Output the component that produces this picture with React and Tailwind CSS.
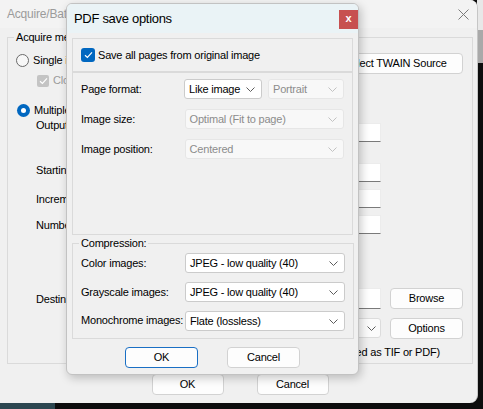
import React from "react";

function Chevron({ disabled }) {
  return (
    <svg width="9" height="5" viewBox="0 0 9 5" className="shrink-0">
      <path
        d="M0.5 0.5L4.5 4.5L8.5 0.5"
        fill="none"
        stroke={disabled ? "#c2c2c2" : "#5c5c5c"}
        strokeWidth="1"
      />
    </svg>
  );
}

function Select({ value, disabled, w }) {
  return (
    <div
      className={
        "flex h-[20px] items-center justify-between rounded-[3px] border pl-[4px] pr-[6px] " +
        (disabled
          ? "border-[#e6e6e6] bg-[#f8f8f8] text-[#8c8c8c]"
          : "border-[#cbcbcb] bg-white text-black") +
        " " +
        w
      }
    >
      <span className="whitespace-nowrap">{value}</span>
      <Chevron disabled={disabled} />
    </div>
  );
}

function Btn({ children, primary, w }) {
  return (
    <div
      className={
        "flex h-[21px] items-center justify-center rounded-[4px] border bg-[#fdfdfd] text-black " +
        (primary ? "border-[#1a6fc4]" : "border-[#d2d2d2]") +
        " " +
        w
      }
    >
      {children}
    </div>
  );
}

function Check({ color }) {
  return (
    <svg width="9" height="8" viewBox="0 0 9 8">
      <path d="M1 4.2L3.4 6.4L8 1.4" fill="none" stroke={color} strokeWidth="1.2" />
    </svg>
  );
}

function TextBox() {
  return (
    <div className="h-[19px] w-[130px] border border-[#ececec] border-b-[#7a7a7a] bg-white" />
  );
}

function Spacer() {
  return <div className="w-[73px]" />;
}

function BackgroundWindow() {
  return (
    <div className="absolute left-0 top-0 flex h-[403px] w-[478px] flex-col overflow-hidden rounded-r-[8px] border-r border-[#c6c6c6] bg-[#f0f0f0]">
      <div className="flex h-[28px] shrink-0 items-center justify-between bg-[#f3f3f3] pl-[7px] pr-[8px]">
        <span className="text-[12px] text-[#9b9b9b]">Acquire/Batch conversion</span>
        <svg width="11" height="11" viewBox="0 0 11 11">
          <path d="M0.5 0.5L10.5 10.5M10.5 0.5L0.5 10.5" stroke="#7a7a7a" strokeWidth="1" />
        </svg>
      </div>
      <div className="flex flex-col pl-[7px] pr-[4px] pt-[2px]">
        <fieldset className="h-[334px] border border-[#dadada]">
          <legend className="ml-[6px] px-[2px] leading-[14px]">Acquire method</legend>
          <div className="flex flex-col pl-[8px] pr-[9px]">
            <div className="mt-[9px] flex h-[21px] items-start justify-between">
              <div className="mt-[1px] flex h-[13px] items-center gap-[4px]">
                <div className="h-[13px] w-[13px] rounded-full border border-[#6a6a6a] bg-[#f7f7f7]" />
                <span>Single image</span>
              </div>
              <Btn w="w-[135px]">Select TWAIN Source</Btn>
            </div>
            <div className="ml-[21px] flex h-[13px] items-center gap-[4px] text-[#9a9a9a]">
              <div className="flex h-[12px] w-[12px] items-center justify-center rounded-[2px] bg-[#c4c4c4]">
                <Check color="#ffffff" />
              </div>
              <span>Close TWAIN dialog after acquire</span>
            </div>
            <div className="ml-[1px] mt-[17px] flex h-[13px] items-center gap-[4px]">
              <div className="flex h-[13px] w-[13px] items-center justify-center rounded-full bg-[#0067c0]">
                <div className="h-[5px] w-[5px] rounded-full bg-white" />
              </div>
              <span>Multiple images</span>
            </div>
            <div className="mt-[1px] flex items-start justify-between pl-[20px]">
              <span className="leading-[14px]">Output file name:</span>
              <div className="mt-[5px] flex gap-[9px]">
                <TextBox />
                <Spacer />
              </div>
            </div>
            <div className="mt-[21px] flex items-start justify-between pl-[20px]">
              <span className="leading-[14px]">Starting index:</span>
              <div className="flex gap-[9px]">
                <TextBox />
                <Spacer />
              </div>
            </div>
            <div className="mt-[7px] flex items-center justify-between pl-[20px]">
              <span className="leading-[14px]">Increment:</span>
              <div className="flex gap-[9px]">
                <TextBox />
                <Spacer />
              </div>
            </div>
            <div className="mt-[7px] flex items-center justify-between pl-[20px]">
              <span className="leading-[14px]">Number of digits:</span>
              <div className="flex gap-[9px]">
                <TextBox />
                <Spacer />
              </div>
            </div>
            <div className="mt-[54px] flex items-center justify-between pl-[20px]">
              <span className="leading-[14px]">Destination folder:</span>
              <div className="flex items-start gap-[9px]">
                <div className="h-[21px] w-[130px] border border-[#ececec] border-b-[#7a7a7a] bg-white" />
                <Btn w="w-[73px]">Browse</Btn>
              </div>
            </div>
            <div className="mt-[9px] flex justify-end gap-[9px]">
              <div className="flex h-[20px] w-[130px] items-center justify-end rounded-[3px] border border-[#dcdcdc] bg-[#fbfbfb] pr-[4px]">
                <Chevron />
              </div>
              <Btn w="w-[73px]">Options</Btn>
            </div>
            <div className="mt-[6px] flex justify-end pr-[23px] leading-[14px]">
              <span>(Multipage is saved as TIF or PDF)</span>
            </div>
          </div>
        </fieldset>
        <div className="mt-[10px] flex justify-center gap-[33px]">
          <Btn w="w-[72px]">OK</Btn>
          <Btn w="w-[72px]">Cancel</Btn>
        </div>
      </div>
    </div>
  );
}

function PdfDialog() {
  return (
    <div className="absolute left-[66px] top-[3px] flex h-[372px] w-[293px] flex-col overflow-hidden rounded-[6px] border border-[#c2c2c2] bg-[#f0f0f0] shadow-[2px_3px_10px_rgba(0,0,0,0.22)]">
      <div className="flex h-[29px] shrink-0 items-start justify-between bg-[#eaf3f6]">
        <span className="mt-[7px] pl-[7px] text-[13px] leading-[16px] tracking-[-0.3px] text-black">
          PDF save options
        </span>
        <div className="mt-[6px] flex h-[19px] w-[19px] items-center justify-center bg-[#c75050] pb-[2px] text-[11px] font-bold text-white">
          x
        </div>
      </div>
      <div className="flex flex-1 flex-col px-[5px] pt-[5px]">
        <div className="flex h-[34px] items-center gap-[3px] border border-[#dadada] pl-[8px]">
          <div className="flex h-[14px] w-[14px] items-center justify-center rounded-[3px] bg-[#0067c0]">
            <Check color="#ffffff" />
          </div>
          <span>Save all pages from original image</span>
        </div>
        <div className="flex h-[163px] flex-col gap-[10px] border border-[#dadada] pl-[8px] pr-[8px] pt-[6px]">
          <div className="flex items-center">
            <span className="w-[104px]">Page format:</span>
            <div className="flex gap-[6px]">
              <Select value="Like image" w="w-[78px]" />
              <Select value="Portrait" disabled w="w-[76px]" />
            </div>
          </div>
          <div className="flex items-center">
            <span className="w-[104px]">Image size:</span>
            <Select value="Optimal (Fit to page)" disabled w="w-[160px]" />
          </div>
          <div className="flex items-center">
            <span className="w-[104px]">Image position:</span>
            <Select value="Centered" disabled w="w-[160px]" />
          </div>
        </div>
        <fieldset className="mt-[1px] border border-[#dadada]">
          <legend className="ml-[6px] px-[2px] leading-[14px]">Compression:</legend>
          <div className="flex flex-col gap-[9px] pb-[7px] pl-[8px] pr-[8px] pt-[3px]">
            <div className="flex items-center">
              <span className="w-[104px]">Color images:</span>
              <Select value="JPEG - low quality (40)" w="w-[160px]" />
            </div>
            <div className="flex items-center">
              <span className="w-[104px]">Grayscale images:</span>
              <Select value="JPEG - low quality (40)" w="w-[160px]" />
            </div>
            <div className="flex items-center">
              <span className="-mt-[2px] w-[104px]">Monochrome images:</span>
              <Select value="Flate (lossless)" w="w-[160px]" />
            </div>
          </div>
        </fieldset>
        <div className="mt-[8px] flex justify-center gap-[29px]">
          <Btn primary w="w-[73px]">OK</Btn>
          <Btn w="w-[73px]">Cancel</Btn>
        </div>
      </div>
    </div>
  );
}

export default function App() {
  return (
    <div className="relative h-[409px] w-[483px] overflow-hidden bg-[#0d0d0d] font-['Liberation_Sans',Arial,sans-serif] text-[11px] tracking-[-0.2px] text-black">
      <div className="absolute bottom-0 left-0 h-[6px] w-[55px] bg-[#2c4650]" />
      <div className="absolute right-0 top-0 flex w-[6px] flex-col">
        <div className="h-[30px] bg-[#e8e8e8]" />
        <div className="h-[33px] bg-[#a9a9a9]" />
      </div>
      <BackgroundWindow />
      <PdfDialog />
    </div>
  );
}
